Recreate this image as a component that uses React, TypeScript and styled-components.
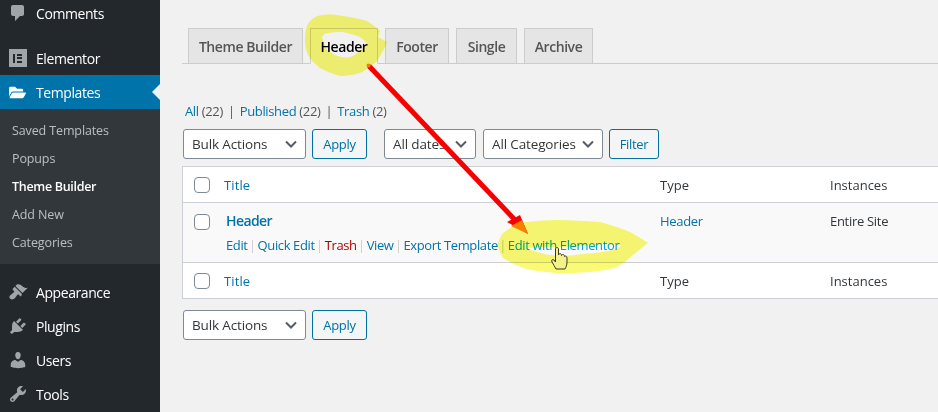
import React from 'react';
import styled, { createGlobalStyle } from 'styled-components';
import { FaFolderOpen } from 'react-icons/fa';

const Global = createGlobalStyle`
  html, body { margin: 0; padding: 0; width: 938px; height: 412px; overflow: hidden; background: #f1f1f1; }
  body { font-family: "Open Sans", "Noto Sans", "Liberation Sans", sans-serif; font-size: 13px; color: #444; }
  * { box-sizing: border-box; }
`;

const Page = styled.div`
  position: relative; display: flex; width: 938px; height: 412px; overflow: hidden; background: #f1f1f1;
`;
const Sidebar = styled.nav`
  width: 160px; flex: none; height: 412px; background: #23282d; margin: 0; padding-top: 0; overflow: hidden;
  display: flex; flex-direction: column;
`;
const MenuGroup = styled.div<{ $first?: boolean }>`
  margin-top: ${p => (p.$first ? '-4px' : '11px')};
`;
const MenuItem = styled.div<{ $current?: boolean }>`
  position: relative; height: 34px; display: flex; align-items: center; padding-left: 9px; gap: 10px;
  font-size: 14px; letter-spacing: -0.42px; color: #fff; background: ${p => (p.$current ? '#0073aa' : 'transparent')};
  ${p => p.$current ? `&::after { content: ""; position: absolute; right: 0; top: 50%; margin-top: -8px; border: 8px solid transparent; border-right-color: #f1f1f1; }` : ''}
`;
const IconSlot = styled.span`
  width: 17px; height: 20px; flex: none; display: flex; align-items: center; justify-content: center; color: #a0a5aa;
  svg { display: block; flex: none; }
`;
const CurrentIcon = styled(IconSlot)`color: #fff;`;
const SubMenu = styled.div`
  background: #32373c; padding: 7px 0 8px;
`;
const SubItem = styled.div<{ $on?: boolean }>`
  height: 28px; display: flex; align-items: center; padding-left: 12px; font-size: 12.5px;
  letter-spacing: ${p => (p.$on ? '-0.3px' : '-0.12px')};
  color: ${p => (p.$on ? '#fff' : 'rgba(240,245,250,.7)')}; font-weight: ${p => (p.$on ? 600 : 400)};
`;
const ElementorMark = styled.span`
  width: 18px; height: 18px; background: #a0a5aa; display: flex; align-items: center; justify-content: center; gap: 1.5px;
  flex: none;
`;
const MarkI = styled.i`display: block; width: 2px; height: 9px; background: #23282d;`;
const MarkE = styled.i`
  display: flex; flex-direction: column; justify-content: space-between; width: 5px; height: 9px;
  &::before, &::after { content: ""; display: block; height: 2px; background: #23282d; }
  background: linear-gradient(#23282d, #23282d) center / 100% 2px no-repeat;
`;

const Main = styled.main`
  flex: 1; min-width: 0; padding: 28px 0 0 22px;
`;
const Tabs = styled.div`
  display: flex; gap: 7px; padding-left: 6px; border-bottom: 1px solid #ccc; height: 36px;
`;
const Tab = styled.div<{ $w: number; $active?: boolean }>`
  width: ${p => p.$w}px; height: 36px; display: flex; align-items: center; justify-content: center;
  border: 1px solid #ccc; background: ${p => (p.$active ? '#f1f1f1' : '#e5e5e5')};
  border-bottom: ${p => (p.$active ? '1px solid #f1f1f1' : '1px solid #ccc')};
  font-size: 14px; font-weight: 600; letter-spacing: -0.42px; color: ${p => (p.$active ? '#000' : '#555')};
`;
const Filters = styled.div`
  margin: 38px 0 0 3px; height: 18px; line-height: 18px; display: flex; gap: 4px; font-size: 13px; letter-spacing: -0.35px; color: #555;
`;
const FilterLink = styled.span`color: #0073aa;`;
const Count = styled.span`color: #555;`;
const Sep = styled.span`color: #555; margin: 0 1px;`;
const Toolbar = styled.div<{ $bottom?: boolean }>`
  display: flex; align-items: center; gap: 6px; height: 30px; margin: ${p => (p.$bottom ? '11px 0 0 1px' : '9px 0 7px 1px')};
`;
const Select = styled.div<{ $w: number; $after?: number }>`
  width: ${p => p.$w}px; height: 30px; margin-right: ${p => p.$after ?? 0}px; flex: none;
  display: flex; align-items: center; justify-content: space-between; padding: 0 6px 0 8px;
  background: #fff; border: 1px solid #7e8993; border-radius: 3px; color: #32373c; font-size: 13.5px; letter-spacing: -0.14px; white-space: nowrap;
  svg { flex: none; }
`;
const Button = styled.div<{ $w: number; $after?: number }>`
  width: ${p => p.$w}px; height: 30px; margin-right: ${p => p.$after ?? 0}px; flex: none;
  display: flex; align-items: center; justify-content: center; background: #f3f5f6; border: 1px solid #0071a1; border-radius: 3px;
  color: #0071a1; font-size: 13px; letter-spacing: -0.3px;
`;
const Table = styled.div`
  width: 780px; border: 1px solid #ccd0d4; background: #fff;
`;
const Row = styled.div<{ $kind: 'head' | 'foot' | 'body' }>`
  display: grid; grid-template-columns: 41px 436px 170px 1fr;
  height: ${p => (p.$kind === 'body' ? 60 : p.$kind === 'head' ? 35 : 36)}px;
  background: ${p => (p.$kind === 'body' ? '#f9f9f9' : '#fff')};
  border-top: ${p => (p.$kind === 'head' ? 'none' : '1px solid #ccd0d4')};
  align-items: ${p => (p.$kind === 'body' ? 'start' : 'center')};
`;
const CheckCell = styled.div<{ $top?: number }>`
  padding: ${p => p.$top ?? 0}px 0 0 11px; display: flex;
`;
const Check = styled.span`
  display: block; width: 16px; height: 16px; background: #fff; border: 1px solid #7e8993; border-radius: 4px;
`;
const ColTitle = styled.div`color: #0073aa; font-size: 13px; letter-spacing: 0.1px;`;
const ColHead = styled.div`color: #32373c; font-size: 13px; letter-spacing: 0;`;
const TitleCell = styled.div`padding: 8px 0 0 2px;`;
const RowName = styled.div`color: #0073aa; font-weight: 600; font-size: 14px; line-height: 20px; letter-spacing: -0.6px;`;
const Actions = styled.div`
  display: flex; align-items: center; font-size: 13px; line-height: 18px; margin-top: 5px; letter-spacing: -0.38px; white-space: nowrap;
`;
const Action = styled.span<{ $tone?: 'danger' | 'hover' }>`
  color: ${p => (p.$tone === 'danger' ? '#a00' : p.$tone === 'hover' ? '#00a0d2' : '#0073aa')};
`;
const ActionSep = styled.span`color: #ccc; width: 10px; display: flex; justify-content: center; letter-spacing: 0;`;
const BodyCell = styled.div<{ $link?: boolean }>`
  padding-top: 8px; line-height: 20px; font-size: 13px; letter-spacing: -0.3px; color: ${p => (p.$link ? '#0073aa' : '#32373c')};
`;

const Overlay = styled.svg`
  position: absolute; inset: 0; width: 938px; height: 412px; pointer-events: none;
`;
const Highlight = styled.path`
  fill: #fafa74; fill-rule: evenodd; mix-blend-mode: multiply;
`;

const Chevron = () => (
  <svg width="16" height="16" viewBox="0 0 16 16"><path d="M3 5.5 8 10.5 13 5.5" fill="none" stroke="#555d66" strokeWidth="2" /></svg>
);
const Dash = ({ d }: { d: string }) => (
  <svg width="20" height="20" viewBox="0 0 20 20" fill="currentColor"><path d={d} /></svg>
);

const icons = {
  comments: 'M5 2h9c1.1 0 2 .9 2 2v7c0 1.1-.9 2-2 2h-2l-5 5v-5H5c-1.1 0-2-.9-2-2V4c0-1.1.9-2 2-2z',
  appearance: 'M14.48 11.06L7.41 3.99l1.5-1.5c.5-.56 2.3-.47 3.51.32 1.21.8 1.43 1.28 2.91 2.1 1.18.64 2.45 1.26 4.45.85zm-.71.71L6.7 4.7 4.93 6.47c-.39.39-.39 1.02 0 1.41l1.06 1.06c.39.39.39 1.03 0 1.42-.6.6-1.43 1.11-2.21 1.69-.35.26-.7.53-1.01.84C1.43 13.23.83 15.29 2.2 16.66c1.37 1.37 3.43.77 4.78-.58.31-.31.58-.66.84-1.01.58-.78 1.09-1.61 1.69-2.21.39-.39 1.03-.39 1.42 0l1.06 1.06c.39.39 1.02.39 1.41 0z',
  plugins: 'M13.11 4.36L9.87 7.6 8 5.73l3.24-3.24c.35-.34 1.05-.2 1.56.32.52.51.66 1.21.31 1.55zm-8 1.77l.91-1.12 9.01 9.01-1.19.84c-.71.71-2.63 1.16-3.82 1.16H6.14L4.9 17.26c-.59.59-1.54.59-2.12 0-.59-.58-.59-1.53 0-2.12l1.24-1.24v-3.88c0-1.13.4-3.19 1.09-3.89zm7.26 3.97l3.24-3.24c.34-.35 1.04-.21 1.55.31.52.51.66 1.21.31 1.55l-3.24 3.25z',
  users: 'M10 9.25c-2.27 0-2.73-3.44-2.73-3.44C7 4.02 7.82 2 9.97 2c2.16 0 2.98 2.02 2.71 3.81 0 0-.41 3.44-2.68 3.44zm0 2.57L12.72 10c2.39 0 4.52 2.33 4.52 4.53v2.49s-3.65 1.13-7.24 1.13c-3.65 0-7.24-1.13-7.24-1.13v-2.49c0-2.25 1.94-4.48 4.47-4.48z',
  tools: 'M16.68 9.77c-1.34 1.34-3.3 1.67-4.95.99l-5.41 6.52c-.99.99-2.59.99-3.58 0s-.99-2.59 0-3.57l6.52-5.42c-.68-1.65-.35-3.61.99-4.95 1.28-1.28 3.12-1.62 4.72-1.06l-2.89 2.89 2.82 2.82 2.86-2.87c.53 1.58.18 3.39-1.08 4.65zM3.81 16.21c.4.39 1.04.39 1.43 0 .4-.4.4-1.04 0-1.43-.39-.4-1.03-.4-1.43 0-.39.39-.39 1.03 0 1.43z',
};

const tabs = [
  { label: 'Theme Builder', w: 115 },
  { label: 'Header', w: 68, active: true },
  { label: 'Footer', w: 64 },
  { label: 'Single', w: 61 },
  { label: 'Archive', w: 69 },
];

const BulkBar = ({ bottom }: { bottom?: boolean }) => (
  <>
    <Select $w={123}>Bulk Actions<Chevron /></Select>
    <Button $w={55} $after={bottom ? 0 : 11}>Apply</Button>
  </>
);

export default function App() {
  return (
    <Page>
      <Global />
      <Sidebar>
        <MenuGroup $first>
          <MenuItem><IconSlot><Dash d={icons.comments} /></IconSlot>Comments</MenuItem>
        </MenuGroup>
        <MenuGroup>
          <MenuItem><IconSlot><ElementorMark><MarkI /><MarkE /></ElementorMark></IconSlot>Elementor</MenuItem>
          <MenuItem $current><CurrentIcon><FaFolderOpen size={17} /></CurrentIcon>Templates</MenuItem>
          <SubMenu>
            <SubItem>Saved Templates</SubItem>
            <SubItem>Popups</SubItem>
            <SubItem $on>Theme Builder</SubItem>
            <SubItem>Add New</SubItem>
            <SubItem>Categories</SubItem>
          </SubMenu>
        </MenuGroup>
        <MenuGroup>
          <MenuItem><IconSlot><Dash d={icons.appearance} /></IconSlot>Appearance</MenuItem>
          <MenuItem><IconSlot><Dash d={icons.plugins} /></IconSlot>Plugins</MenuItem>
          <MenuItem><IconSlot><Dash d={icons.users} /></IconSlot>Users</MenuItem>
          <MenuItem><IconSlot><Dash d={icons.tools} /></IconSlot>Tools</MenuItem>
        </MenuGroup>
      </Sidebar>
      <Main>
        <Tabs>
          {tabs.map(t => <Tab key={t.label} $w={t.w} $active={t.active}>{t.label}</Tab>)}
        </Tabs>
        <Filters>
          <span><FilterLink>All</FilterLink> <Count>(22)</Count></span><Sep>|</Sep>
          <span><FilterLink>Published</FilterLink> <Count>(22)</Count></span><Sep>|</Sep>
          <span><FilterLink>Trash</FilterLink> <Count>(2)</Count></span>
        </Filters>
        <Toolbar>
          <BulkBar />
          <Select $w={92} $after={1}>All dates<Chevron /></Select>
          <Select $w={120}>All Categories<Chevron /></Select>
          <Button $w={50}>Filter</Button>
        </Toolbar>
        <Table>
          <Row $kind="head">
            <CheckCell><Check /></CheckCell>
            <ColTitle>Title</ColTitle>
            <ColHead>Type</ColHead>
            <ColHead>Instances</ColHead>
          </Row>
          <Row $kind="body">
            <CheckCell $top={11}><Check /></CheckCell>
            <TitleCell>
              <RowName>Header</RowName>
              <Actions>
                <Action>Edit</Action><ActionSep>|</ActionSep>
                <Action>Quick Edit</Action><ActionSep>|</ActionSep>
                <Action $tone="danger">Trash</Action><ActionSep>|</ActionSep>
                <Action>View</Action><ActionSep>|</ActionSep>
                <Action>Export Template</Action><ActionSep>|</ActionSep>
                <Action $tone="hover">Edit with Elementor</Action>
              </Actions>
            </TitleCell>
            <BodyCell $link>Header</BodyCell>
            <BodyCell>Entire Site</BodyCell>
          </Row>
          <Row $kind="foot">
            <CheckCell><Check /></CheckCell>
            <ColTitle>Title</ColTitle>
            <ColHead>Type</ColHead>
            <ColHead>Instances</ColHead>
          </Row>
        </Table>
        <Toolbar $bottom><BulkBar bottom /></Toolbar>
      </Main>
      <Overlay viewBox="0 0 938 412">
        <Highlight d="M305 41C305 32 306 26 310 21C314 17 318 15 323 15C330 14 337 15 343 16C352 17 360 19 367 21C372 24 377 28 380 31L378 37L387 42C386 45 385 48 383 51C381 54 379 58 377 61C372 66 366 70 360 73C353 75 347 76 340 76C333 74 326 71 320 68C315 64 311 60 308 55C306 50 305 46 305 41ZM322 37C323 35 325 33 328 33C333 32 338 32 343 32C349 33 355 35 360 37C363 39 365 41 367 44C365 47 363 49 360 51C357 53 354 56 350 57C346 58 341 57 337 56C333 54 330 52 327 50C325 46 323 41 322 37Z" />
        <Highlight d="M498 243C499 239 501 236 503 233C508 229 514 225 520 223C532 221 545 220 557 220C572 220 586 221 600 222C611 225 621 228 630 232C636 235 642 239 648 243C643 247 638 251 633 255C628 259 623 264 617 267C608 270 599 271 590 272C579 273 568 273 557 273C546 272 534 271 523 268C516 265 509 262 503 258C500 253 498 248 498 243ZM527 248C537 247 547 247 557 247C568 247 579 246 590 245C601 244 612 244 622 245C620 247 617 249 613 250C604 252 594 253 583 254C575 255 566 256 557 256C550 255 543 254 537 252C533 251 530 250 527 248Z" />
        <path d="M369 66 516 221" stroke="#f60000" strokeWidth="5" fill="none" />
        <circle cx="368.500" cy="65.500" r="2" fill="#f78000" />
        <polygon points="507,222 520,215 528,234" fill="#f60000" />
        <polygon points="511,226 522,220 528,234" fill="#f78000" />
        <path d="M555.500 249C555.500 247 558.500 247 558.500 249V255C559 253 561.500 253 561.500 255.500C562 254 564.500 254 564.500 256.500C565 255.500 567 256 567 258V262C567 265 566 267 565 269H556C555 267 553 264 552 262C551 260 552.500 259 554 260L555.500 262Z" fill="#f4f08a" stroke="#3a3a20" strokeWidth="1" />
      </Overlay>
    </Page>
  );
}
